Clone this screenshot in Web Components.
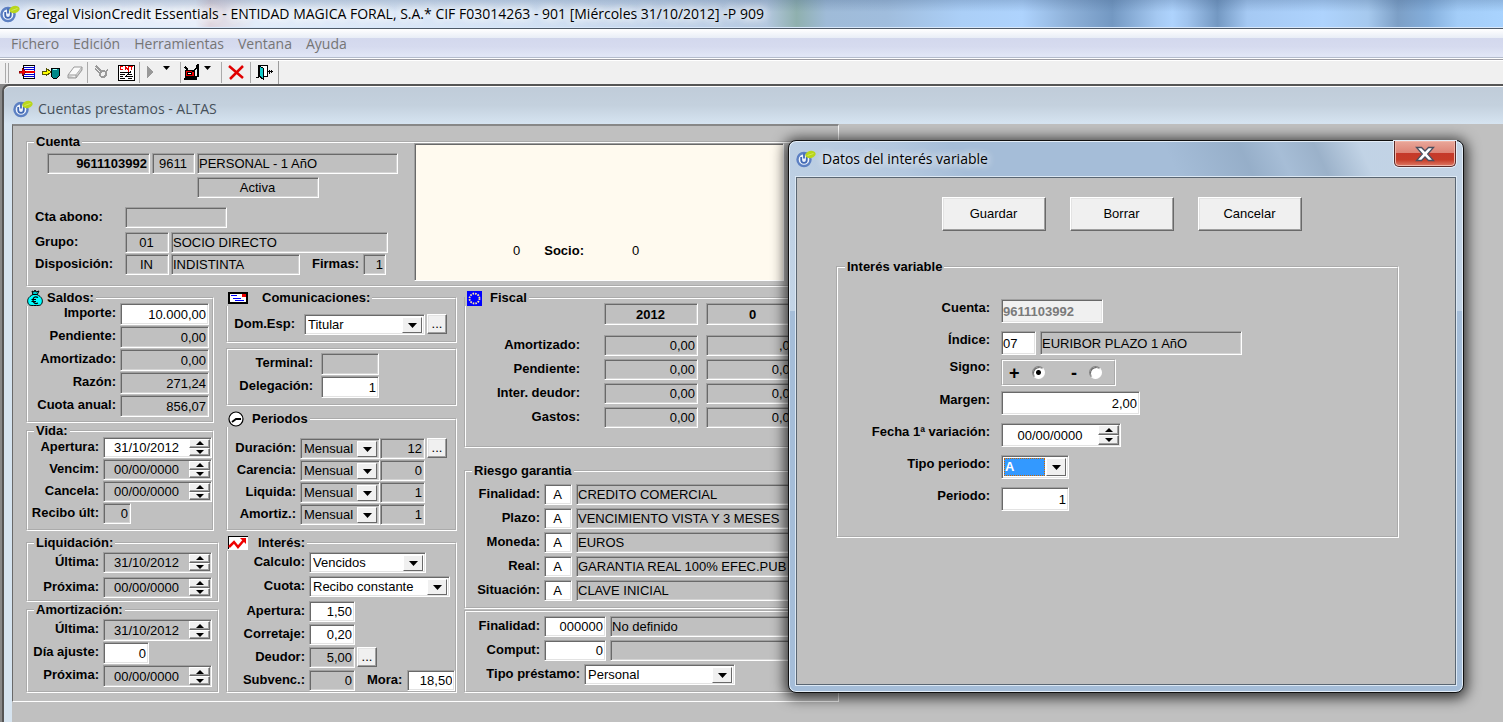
<!DOCTYPE html>
<html lang="es">
<head>
<meta charset="utf-8">
<title>Gregal VisionCredit Essentials</title>
<style>
html, body { margin: 0; height: 100%; }
body { background: #c0c0c0; font: 13px/16px "Liberation Sans", Arial, sans-serif; color: #000; overflow: hidden; }
</style>
</head>
<body>
<credit-app></credit-app>

<script>
const define = (name, render) => customElements.define(name, class extends HTMLElement {
  connectedCallback() {
    if (this.shadowRoot) return;
    this.attachShadow({ mode: 'open' }).innerHTML = render(this);
  }
});
const attr = (el, name, fallback = '') => el.getAttribute(name) ?? fallback;

/* Product emblem: blue power ring with a green leaf */
define('app-logo', () => `
<style>:host{display:block;width:20px;height:18px;flex:none}svg{display:block}</style>
<svg width="20" height="18" viewBox="0 0 20 18">
  <circle cx="8" cy="9.500" r="7.800" fill="#b9c8e6"/>
  <circle cx="8" cy="9.500" r="6.500" fill="#eef3fb" stroke="#5c80c2" stroke-width="2.400"/>
  <path d="M5.200 7v3a2.800 2.800 0 0 0 5.600 0V7" fill="none" stroke="#4068b4" stroke-width="1.800"/>
  <path d="M8 3.500v5" stroke="#4068b4" stroke-width="1.800"/>
  <ellipse cx="14.500" cy="4.500" rx="5.200" ry="3.600" transform="rotate(-14 14.500 4.500)" fill="#b9d61c"/>
  <path d="M11.500 5.500l6-2" stroke="#d3e85a" stroke-width="1"/>
</svg>`);

define('app-titlebar', el => `
<style>
:host{display:flex;align-items:center;height:28px;box-sizing:border-box;border-bottom:1px solid #d9e8fa;
  font:14px/20px "Open Sans","Segoe UI",sans-serif;white-space:nowrap;
  background:
    linear-gradient(180deg,rgba(60,90,130,.25),transparent 12px),
    linear-gradient(90deg,#dfeafa 0,#e8effa 13%,#dfd5de 14%,#e2ecf9 17%,#d4e3f5 34%,#c2d4ea 45%,#b4c8e0 51%,#8fb0ae 53%,#9fbbd8 55%,#a0bddd 59%,#abcff7 64%,#aed3fd 68%,#8fb2da 71%,#7398c2 74%,#a5c9f2 77%,#aed3fd 78%,#a0c4ee 79%,#7398c2 81%,#a5c9f3 83%,#aed3fd 88%,#a6c9ee 91%,#7c9fc6 93%,#84aedb 95%,#a3cdf8 97%,#a9d3fe 100%)}
app-logo{margin:0 6px 0 0}
span{text-shadow:0 0 8px #fff,0 0 8px #fff,0 0 12px #fff}
</style>
<app-logo></app-logo><span><slot></slot></span>`);

define('app-menubar', () => `
<style>
:host{display:block;height:32px;box-sizing:border-box;border-top:1px solid #4e5a68;border-bottom:1px solid #9c9ca4;
  box-shadow:inset 0 -1px #fff,inset 0 -2px #b4bccc;
  background:linear-gradient(180deg,#fff 0,#e8edf6 9px,#d3d8ed 9px,#d6dbef 18px,#e1e6f6 27px)}
nav{display:flex;gap:14px;padding:5px 11px}
a{font:14px/20px "Open Sans","Segoe UI",sans-serif;color:#757575;text-decoration:none}
</style>
<nav>${['Fichero', 'Edición', 'Herramientas', 'Ventana', 'Ayuda'].map(t => `<a href="#">${t}</a>`).join('')}</nav>`);

define('app-toolbar', () => {
  const b = (label, w, svg) => `<button aria-label="${label}" style="width:${w}px"><svg width="18" height="18" viewBox="0 0 18 18" shape-rendering="crispEdges">${svg}</svg></button>`;
  const drop = label => `<button class="drop" aria-label="${label}"><svg width="7" height="4" viewBox="0 0 7 4"><path d="M0 0h7L3.500 4z"/></svg></button>`;
  return `
<style>
:host{display:flex;align-items:center;height:24px;box-sizing:border-box;background:#f0f0f0;border-top:1px solid #fff;padding-left:5px}
.bar{display:flex;align-items:center;height:23px;border-right:1px solid #9c9c9c}
.grip{width:2px;height:20px;border-left:1px solid #aaa;border-right:1px solid #aaa;margin-right:6px}
i{width:1px;height:21px;background:#aaa}
button{display:flex;align-items:center;justify-content:center;border:0;padding:0 0 2px;background:none;height:22px}
.drop{width:12px;padding:0 0 10px 0}
.space{width:8px}
</style>
<div class="bar" role="toolbar"><span class="grip"></span>
${b('Importar', 24, '<path d="M5 3h12v12H5z" fill="#fff"/><path d="M5 2.500h12M5 15.500h12M5.500 2v14" stroke="#000"/><path d="M6 4.500h11M6 6.500h11M6 11.500h11M6 13.500h11M16.500 3v12" stroke="#00c"/><path d="M6 9h11" stroke="#e00" stroke-width="2"/><path d="M1 8h3V5l4 4-4 4v-3H1z" fill="#e00" stroke="#600" stroke-width=".5"/>')}
${b('Guardar', 24, '<path d="M9 5h8v8l-2 2h-4l-2-2z" fill="#088" stroke="#000"/><path d="M11 6.500h4" stroke="#9ff"/><path d="M0 8h4V5l5 4-5 4v-2H0z" fill="#ff0" stroke="#550"/>')}
${b('Limpiar', 24, '<g shape-rendering="auto" stroke="#999"><path d="M2 12L8 4h8l-6 8z" fill="#fafafa"/><path d="M10 12v3l6-8V4M2 12v3h8" fill="#ccc"/></g>')}
<i></i>
${b('Claves', 25, '<circle cx="11" cy="11" r="3" fill="none" stroke="#999" stroke-width="2"/><path d="M4 3l6 6M3 6l5 4M13 9l3-2" stroke="#999" stroke-width="1.500"/>')}
${b('Contrato', 26, '<path d="M1 2h16v15H1z" fill="#fff" stroke="#000"/><path d="M6 3.500H3v3h3M8 7V3l3 4V3M12 3.500h4M14 3v4" fill="none" stroke="#e00"/><path d="M3 9.500h11M3 11.500h5M10 11.500h5M3 13.500h3M9 13.500h7M3 15.500h5M11 15.500h4" stroke="#000"/><path d="M14 8l-6 6" stroke="#000"/>')}
<i></i>
${b('Ejecutar', 20, '<path d="M6 3l7 6-7 6z" fill="#999"/>')}${drop('Más acciones')}<span class="space"></span>
<i></i>
${b('Fax', 20, '<path d="M3 7h9v6H3z" fill="#e00" stroke="#000"/><path d="M2 16h13M3 14h11M3 4l3 3M14 3l2-1M11 9l5-6v10l-3 2" fill="none" stroke="#000" stroke-width="1.500"/><path d="M5 9h4v2H5z" fill="#fff" stroke="#000"/>')}${drop('Más opciones')}<span class="space"></span>
<i></i>
${b('Cancelar', 28, '<path d="M2 3l14 12M16 3L3 16" stroke="#e00000" stroke-width="2.500" shape-rendering="auto"/>')}
<i></i>
${b('Salir', 27, '<path d="M2 2.500h9v11H2z" fill="#fff" stroke="#000"/><path d="M3 3l4 2v11l-4-3z" fill="#1cc" stroke="#000"/><path d="M12 8.500h5M13.500 6.500v4M15.500 7v3M0 14.500h3" stroke="#000"/>')}
</div>`;
});

/* Maximised child window inside the application frame */
define('mdi-window', el => `
<style>
:host{display:block;border-left:2px solid #555;border-top:2px solid #555;border-top-left-radius:7px;background:#c0c0c0}
header{display:flex;align-items:center;height:38px;box-sizing:border-box;padding:7px 0 0 9px;gap:5px;border-top:1px solid #fff;border-top-left-radius:6px;
  font:14px/20px "Open Sans","Segoe UI",sans-serif;color:#46505a;background:linear-gradient(180deg,#c0ccd9,#c4d1de 50%,#d6e4f1)}
.body{border-left:8px solid #d6e4f0;min-height:calc(100vh - 124px);display:flex;align-items:flex-start}
</style>
<header><app-logo></app-logo><span>${attr(el, 'heading')}</span></header>
<div class="body"><slot></slot></div>`);

/* Etched frame with a caption and an optional icon */
define('group-box', el => `
<style>
:host{display:block;margin-top:var(--gap,0)}
fieldset{margin:0;padding:0 0 var(--pb,5px);min-width:0;border:2px groove #fff}
legend{display:flex;gap:var(--ig,0);margin-left:var(--ll,6px);padding:0 2px;height:16px;line-height:16px;font-weight:bold;align-items:center}
.body{display:grid;row-gap:var(--rg,1px);grid-auto-rows:var(--rh,21px);grid-template-rows:var(--rows,none);margin-top:var(--mt,0)}
</style>
<fieldset>${el.hasAttribute('legend') ? `<legend><slot name="icon"></slot><span>${attr(el, 'legend')}</span></legend>` : ''}
<div class="body"><slot></slot></div></fieldset>`);

const controlCss = `
.box{display:flex;box-sizing:border-box;height:var(--fh,21px);min-width:0;background:#fff;
  border:1px solid;border-color:#a0a0a0 #fff #fff #a0a0a0;box-shadow:inset 1px 1px #696969,inset -1px -1px #e3e3e3;padding:1px}
.box.grey{background:#c0c0c0;box-shadow:inset 1px 1px #696969,inset -1px -1px #d4d4d4}
.box.off{background:#f0f0f0}
input,select{font:13px/16px "Liberation Sans",Arial,sans-serif;color:#000;border:0;margin:0;padding:0 1px 0 0;background:none;min-width:0;width:100%;height:100%;box-sizing:border-box;outline:0;appearance:none;border-radius:0}
.bold input{font-weight:bold}
.off input{color:#7a7a7a}
button{border:1px solid;border-color:#fff #696969 #696969 #fff;background:#f0f0f0;box-shadow:inset -1px -1px #a0a0a0;padding:0;box-sizing:border-box;display:flex;align-items:center;justify-content:center}`;

/* A labelled control: kind is text, date or combo */
let serial = 0;
define('form-field', el => {
  const id = 'c' + (++serial), kind = attr(el, 'kind', 'text'), label = attr(el, 'label'), value = attr(el, 'value');
  const cls = ['box', kind, attr(el, 'look')].join(' ');
  const name = label ? '' : `aria-label="${attr(el, 'name', 'Valor')}"`;
  const w = attr(el, 'w') ? `width:${attr(el, 'w')}px;flex:none` : 'flex:1';
  const align = attr(el, 'align', kind === 'date' ? 'center' : 'left');
  const ro = /grey/.test(attr(el, 'look')) ? 'readonly' : /off/.test(attr(el, 'look')) ? 'disabled' : '';
  let inner;
  if (kind === 'combo') inner = `<select id="${id}" ${name}><option>${value}</option></select><span class="arrow"><svg width="9" height="5"><path d="M0 0h9L4.500 5z"/></svg></span>`;
  else inner = `<input id="${id}" ${name} value="${value}" ${ro} style="text-align:${align}">` +
    (kind === 'date' ? `<span class="spin"><button tabindex="-1" aria-label="Subir"><svg width="8" height="4"><path d="M0 4h8L4 0z"/></svg></button><button tabindex="-1" aria-label="Bajar"><svg width="8" height="4"><path d="M0 0h8L4 4z"/></svg></button></span>` : '');
  return `
<style>${controlCss}
:host{display:flex;align-items:flex-start;min-width:0}
label{flex:none;width:var(--lw,auto);margin-right:var(--lg,4px);text-align:var(--ta,right);font-weight:bold;line-height:var(--llh,20px);white-space:nowrap}
.spin{flex:none;width:21px;display:grid;grid-template-rows:1fr 1fr}
.spin button{width:21px;min-height:0}
.combo{display:grid;grid-template-columns:1fr 20px;padding:2px}
.combo select{grid-area:1/1/2/3;padding:0 20px 0 1px}
.arrow{grid-area:1/2;pointer-events:none;border:1px solid;border-color:#fff #696969 #696969 #fff;background:#f0f0f0;display:flex;align-items:center;justify-content:center}
.chosen select{color:#fff;font-weight:bold;background:#39f;outline:1px dotted #c60;outline-offset:-1px;padding:0 0 0 1px;grid-area:1/1;width:calc(100% - 1px)}
</style>
${label ? `<label for="${id}">${label}</label>` : ''}<div class="${cls}" style="${w}">${inner}</div><slot></slot>`;
});

define('push-button', el => `
<style>
:host{display:block}
button{font:13px/16px "Liberation Sans",Arial,sans-serif;color:#000;width:100%;height:100%;padding:0;border:1px solid;border-color:#fff #696969 #696969 #fff;background:#f0f0f0;
 box-shadow:inset -1px -1px #a0a0a0,inset 1px 1px #e3e3e3;display:flex;align-items:center;justify-content:center}
</style><button><slot></slot></button>`);

define('sign-choice', el => `
<style>
:host{display:flex;align-items:flex-start}
.l{flex:none;width:var(--lw);margin-right:var(--lg);text-align:right;font-weight:bold;line-height:16px}
div{display:flex;align-items:center;box-sizing:border-box;width:115px;height:27px;border:2px groove #fff;padding:0 12px 0 6px;justify-content:space-between}
label{display:flex;align-items:center;gap:12px;font:bold 18px/20px "Liberation Sans",Arial,sans-serif}
input{appearance:none;margin:0;width:13px;height:13px;border-radius:50%;background:#fff;border:1px solid;border-color:#808080 #fff #fff #808080;box-shadow:inset 1px 1px #696969}
input:checked{background:radial-gradient(circle at 50% 50%,#000 0 2px,#fff 3px)}
</style>
<span class="l" id="t">Signo:</span>
<div role="radiogroup" aria-labelledby="t"><label>+<input type="radio" name="s" checked></label><label>-<input type="radio" name="s"></label></div>`);

/* Yearly tax figures */
define('fiscal-table', () => {
  const f = (v, n) => `<div class="box grey"><input value="${v}" aria-label="${n}" readonly></div>`;
  const rows = [['Amortizado', ',00'], ['Pendiente', '0,00'], ['Inter. deudor', '0,00'], ['Gastos', '0,00']];
  return `
<style>${controlCss}
:host{display:block}
table{border-collapse:collapse;width:342px;table-layout:fixed}
th,td{padding:0 8px 3px 0;height:21px;vertical-align:top}
tbody th{text-align:right;padding-right:24px;line-height:20px}
thead td,thead th{height:22px;padding-bottom:10px}
thead .box{--fh:22px}
input{text-align:right}
thead input{text-align:center;font-weight:bold}
</style>
<table><colgroup><col style="width:138px"><col style="width:102px"><col style="width:102px"></colgroup>
<thead><tr><td></td><th>${f('2012', 'Ejercicio')}</th><th>${f('0', 'Ejercicio anterior')}</th></tr></thead>
<tbody>${rows.map(r => `<tr><th scope="row">${r[0]}:</th><td>${f('0,00', r[0])}</td><td>${f(r[1], r[0] + ' anterior')}</td></tr>`).join('')}</tbody></table>`;
});

define('loan-form', () => `
<style>
:host{display:block;box-sizing:border-box;border:1px solid;border-color:#696969 #fff #fff #696969;padding:8px 8px 8px 13px;border-top-width:2px;border-top-color:#888}
.cols{display:grid;grid-template-columns:193px 231px 366px;column-gap:7px;margin-top:3px;align-items:start}
.narrow{margin-right:5px}
push-button.dots{width:20px;height:20px;margin-left:2px}
.cuenta{--pb:4px;--mt:3px;--rh:auto;--rg:0;--ta:left}
.top{display:grid;grid-template-columns:370px 370px;column-gap:16px}
.acc{display:grid;grid-template-rows:24px 30px 25px 22px 21px}
.line{display:flex;gap:2px;padding-left:7px;--lw:86px}
.ids{padding-left:19px}
.state{padding-left:169px}
.desc{margin-left:4px}
.member{display:flex;align-items:center;box-sizing:border-box;width:370px;height:138px;background:#fffaef;border:1px solid;border-color:#a0a0a0 #fff #fff #a0a0a0;box-shadow:inset 1px 1px #696969;margin-top:-10px;padding:78px 0 0 98px;gap:24px}
.member b{margin-right:24px}
</style>
<group-box class="cuenta" legend="Cuenta"><div class="top">
  <div class="acc">
    <div class="line ids"><form-field name="Número de cuenta" value="9611103992" look="grey bold" align="right" w="103"></form-field><form-field name="Tipo" value="9611" look="grey" align="center" w="43"></form-field><form-field name="Descripción" value="PERSONAL - 1 AñO" look="grey" w="201"></form-field></div>
    <div class="line state"><form-field name="Estado" value="Activa" look="grey" align="center" w="122"></form-field></div>
    <div class="line"><form-field label="Cta abono:" look="grey" w="102"></form-field></div>
    <div class="line"><form-field label="Grupo:" value="01" look="grey" align="center" w="44"></form-field><form-field name="Nombre del grupo" value="SOCIO DIRECTO" look="grey" w="217"></form-field></div>
    <div class="line"><form-field label="Disposición:" value="IN" look="grey" align="center" w="44"></form-field><form-field name="Nombre de disposición" value="INDISTINTA" look="grey" w="129"></form-field><form-field style="--lw:auto;margin-left:10px" label="Firmas:" value="1" look="grey" align="right" w="23"></form-field></div>
  </div>
  <div class="member"><span>0</span><b>Socio:</b><span>0</span></div>
</div></group-box>

<div class="cols">
<div>
  <group-box class="narrow" legend="Saldos:" style="--ll:-3px;--ig:4px;--mt:-3px;--lw:88px;--rh:22px;--fh:22px;--pb:4px">
    <svg slot="icon" width="16" height="16" viewBox="0 0 16 16"><path d="M5 1l2 1 1-2 1 2 3-1-2 4H6z" fill="#0cc" stroke="#000"/><path d="M6 4.500C1 7 0 10 1 13c1 2.500 2 2.500 7 2.500s6 0 7-2.500c1-3 0-6-5-8.500z" fill="#0ff" stroke="#000"/><path d="M11 7.500c-3-1.500-5 0-5 2.500s2 4.500 5 3M4.500 9.500H9M4.500 11.500H9" fill="none" stroke="#000" stroke-width="1.200"/></svg>
    <form-field label="Importe:" value="10.000,00" align="right" w="89"></form-field>
    <form-field label="Pendiente:" value="0,00" look="grey" align="right" w="89"></form-field>
    <form-field label="Amortizado:" value="0,00" look="grey" align="right" w="89"></form-field>
    <form-field label="Razón:" value="271,24" look="grey" align="right" w="89"></form-field>
    <form-field label="Cuota anual:" value="856,07" look="grey" align="right" w="89"></form-field>
  </group-box>
  <group-box class="narrow" legend="Vida:" style="--mt:-2px;--lw:71px">
    <form-field label="Apertura:" kind="date" value="31/10/2012" w="109"></form-field>
    <form-field label="Vencim:" kind="date" value="00/00/0000" look="grey" w="109"></form-field>
    <form-field label="Cancela:" kind="date" value="00/00/0000" look="grey" w="109"></form-field>
    <form-field label="Recibo últ:" value="0" look="grey" align="right" w="28"></form-field>
  </group-box>
  <group-box legend="Liquidación:" style="--gap:4px;--mt:1px;--lw:71px;--rg:4px;--pb:2px">
    <form-field label="Última:" kind="date" value="31/10/2012" look="grey" w="109"></form-field>
    <form-field label="Próxima:" kind="date" value="00/00/0000" look="grey" w="109"></form-field>
  </group-box>
  <group-box legend="Amortización:" style="--mt:1px;--lw:71px;--rh:22px;--fh:22px;--pb:4px">
    <form-field label="Última:" kind="date" value="31/10/2012" look="grey" w="109"></form-field>
    <form-field label="Día ajuste:" value="0" align="right" w="46"></form-field>
    <form-field label="Próxima:" kind="date" value="00/00/0000" look="grey" w="109"></form-field>
  </group-box>
</div>

<div>
  <group-box legend="Comunicaciones:" style="--ll:-2px;--ig:14px;--mt:8px;--lw:67px;--lg:9px;--pb:6px">
    <svg slot="icon" width="20" height="12" viewBox="0 0 20 12" shape-rendering="crispEdges"><path d="M1 1h18v10H1z" fill="#fff" stroke="#000" stroke-width="2"/><path d="M3 3.500h6M5 6.500h8M7 8.500h9" stroke="#00f"/><path d="M14 2h4v3h-4z" fill="#e00"/></svg>
    <form-field label="Dom.Esp:" kind="combo" value="Titular" w="121"><push-button class="dots">...</push-button></form-field>
  </group-box>
  <group-box style="--gap:5px;--mt:3px;--lw:85px;--lg:8px;--rh:22px;--fh:22px;--pb:6px">
    <form-field label="Terminal:" look="grey" w="58"></form-field>
    <form-field label="Delegación:" value="1" align="right" w="58"></form-field>
  </group-box>
  <group-box legend="Periodos" style="--gap:5px;--ll:-2px;--ig:8px;--mt:11px;--lw:68px;--pb:4px">
    <svg slot="icon" width="16" height="16" viewBox="0 0 16 16"><circle cx="8" cy="8" r="7" fill="#fff" stroke="#000" stroke-width="1.200"/><path d="M4 11l4-3h5" fill="none" stroke="#000" stroke-width="1.800"/></svg>
    <form-field label="Duración:" kind="combo" value="Mensual" look="grey" w="80"><form-field name="Duración en periodos" value="12" look="grey" align="right" w="45"></form-field><push-button class="dots">...</push-button></form-field>
    <form-field label="Carencia:" kind="combo" value="Mensual" look="grey" w="80"><form-field name="Carencia en periodos" value="0" look="grey" align="right" w="45"></form-field></form-field>
    <form-field label="Liquida:" kind="combo" value="Mensual" look="grey" w="80"><form-field name="Liquidación en periodos" value="1" look="grey" align="right" w="45"></form-field></form-field>
    <form-field label="Amortiz.:" kind="combo" value="Mensual" look="grey" w="80"><form-field name="Amortización en periodos" value="1" look="grey" align="right" w="45"></form-field></form-field>
  </group-box>
  <group-box legend="Interés:" style="--gap:4px;--ll:-2px;--ig:10px;--mt:1px;--lw:77px;--rg:0;--rows:24px 25px 23px 23px 23px 21px;--pb:0">
    <svg slot="icon" width="20" height="14" viewBox="0 0 20 14"><path d="M0 0h20v14H0z" fill="#fff"/><path d="M0 .5h20M.5 0v13" stroke="#000"/><path d="M1 11l5-5 4 5 6-7" fill="none" stroke="#e00" stroke-width="2.500"/><path d="M12 2h6v6z" fill="#e00"/></svg>
    <form-field label="Calculo:" kind="combo" value="Vencidos" w="117"></form-field>
    <form-field label="Cuota:" kind="combo" value="Recibo constante" w="141"></form-field>
    <form-field label="Apertura:" value="1,50" align="right" w="46"></form-field>
    <form-field label="Corretaje:" value="0,20" align="right" w="46"></form-field>
    <form-field label="Deudor:" value="5,00" look="grey" align="right" w="46"><push-button class="dots">...</push-button></form-field>
    <form-field label="Subvenc.:" value="0" look="grey" align="right" w="46"><form-field style="--lw:auto;--lg:5px;margin-left:12px" label="Mora:" value="18,50" align="right" w="48"></form-field></form-field>
  </group-box>
</div>

<div>
  <group-box legend="Fiscal" style="--ll:-1px;--ig:8px;--mt:-3px;--rh:auto;--pb:15px">
    <svg slot="icon" width="15" height="15" viewBox="0 0 15 15"><path d="M0 0h15v15H0z" fill="#00f"/><circle cx="7.500" cy="7.500" r="5" fill="none" stroke="#ffe9a0" stroke-width="1.800" stroke-dasharray="1.600 1.020"/></svg>
    <fiscal-table></fiscal-table>
  </group-box>
  <group-box legend="Riesgo garantia" style="--gap:15px;--mt:5px;--lw:74px;--rg:3px;--pb:6px">
    <form-field label="Finalidad:" value="A" align="center" w="28"><form-field class="desc" name="Finalidad" value="CREDITO COMERCIAL" look="grey" w="240"></form-field></form-field>
    <form-field label="Plazo:" value="A" align="center" w="28"><form-field class="desc" name="Plazo" value="VENCIMIENTO VISTA Y 3 MESES" look="grey" w="240"></form-field></form-field>
    <form-field label="Moneda:" value="A" align="center" w="28"><form-field class="desc" name="Moneda" value="EUROS" look="grey" w="240"></form-field></form-field>
    <form-field label="Real:" value="A" align="center" w="28"><form-field class="desc" name="Real" value="GARANTIA REAL 100% EFEC.PUB" look="grey" w="240"></form-field></form-field>
    <form-field label="Situación:" value="A" align="center" w="28"><form-field class="desc" name="Situación" value="CLAVE INICIAL" look="grey" w="240"></form-field></form-field>
  </group-box>
  <group-box style="--gap:1px;--mt:4px;--lw:74px;--rg:3px;--pb:6px">
    <form-field label="Finalidad:" value="000000" align="right" w="62"><form-field class="desc" name="Finalidad" value="No definido" look="grey" w="206"></form-field></form-field>
    <form-field label="Comput:" value="0" align="right" w="62"><form-field class="desc" name="Cómputo" look="grey" w="206"></form-field></form-field>
    <form-field style="--lw:114px" label="Tipo préstamo:" kind="combo" value="Personal" w="151"></form-field>
  </group-box>
</div>
</div>`);

/* Floating dialog with a glass frame */
define('glass-dialog', el => `
<style>
:host{display:flex;flex-direction:column;box-sizing:border-box;position:absolute;right:39px;top:140px;width:676px;padding:0 7px 7px;border:1px solid #111;border-radius:8px;
  box-shadow:inset 0 0 0 1px #e4eef8,0 2px 14px 3px rgba(0,0,0,.75);
  background:linear-gradient(65deg,rgba(205,220,235,.75) 0,rgba(200,215,232,.4) 24%,transparent 32%,transparent 60%,rgba(115,140,165,.3) 70%,rgba(170,190,210,.3) 75%,rgba(140,160,180,.4) 80%,rgba(205,220,235,.7) 86%,#c3d3e4 100%) 0 0/100% 170px no-repeat,#a5bdd8}
header{display:flex;align-items:center;height:36px;flex:none;gap:6px;font:14px/18px "Open Sans","Segoe UI",sans-serif;text-shadow:0 0 8px #fff,0 0 10px #fff}
.close{align-self:flex-start;margin-left:auto;width:62px;height:26px;padding:0;border:1px solid #5c2a28;border-top:0;border-radius:0 0 5px 5px;
  box-shadow:inset 0 0 0 1px #f0b5a8,0 0 0 1px #e4eef8;background:linear-gradient(180deg,#e9a79a,#dd8375 48%,#c5392a 50%,#c63c28 75%,#dd7a66)}
.close svg{display:block;margin:auto}
.body{border:1px solid #5a6672;background:#c0c0c0;box-shadow:0 0 0 1px #dce8f4;box-sizing:border-box}
</style>
<header><app-logo></app-logo><span>${attr(el, 'heading')}</span><button class="close" aria-label="Cerrar"><svg width="20" height="16" viewBox="0 0 20 16"><path d="M1.500 1.500h5L10 5l3.500-3.500h5L12.700 8l5.800 6.500h-5L10 11l-3.500 3.500h-5L7.300 8z" fill="#fff" stroke="#4b5060" stroke-width="1.300"/></svg></button></header>
<div class="body"><slot></slot></div>`);

define('rate-form', () => `
<style>
:host{display:block;padding:19px 56px 146px 39px}
.actions{display:flex;justify-content:center;gap:24px;margin-bottom:28px;padding-left:8px}
.actions push-button{width:104px;height:34px}
group-box{--ll:7px;--mt:24px;--lw:152px;--lg:11px;--fh:24px;--rg:0;--rh:32px;--rows:32px 28px;--pb:17px;--llh:18px}
.desc{margin-left:4px}
</style>
<div class="actions"><push-button>Guardar</push-button><push-button>Borrar</push-button><push-button>Cancelar</push-button></div>
<group-box legend="Interés variable">
  <form-field label="Cuenta:" value="9611103992" look="off bold" w="102"></form-field>
  <form-field label="Índice:" value="07" w="35"><form-field class="desc" name="Descripción del índice" value="EURIBOR PLAZO 1 AñO" look="grey" w="202"></form-field></form-field>
  <sign-choice></sign-choice>
  <form-field label="Margen:" value="2,00" align="right" w="139"></form-field>
  <form-field label="Fecha 1ª variación:" kind="date" value="00/00/0000" w="120"></form-field>
  <form-field label="Tipo periodo:" kind="combo" value="A" look="chosen" w="68"></form-field>
  <form-field label="Periodo:" value="1" align="right" w="68"></form-field>
</group-box>`);

define('credit-app', () => `
<style>
:host{display:flex;flex-direction:column;min-height:100vh;position:relative;background:#888}
mdi-window{flex:1;margin-left:2px}
</style>
<app-titlebar>Gregal VisionCredit Essentials - ENTIDAD MAGICA FORAL, S.A.* CIF F03014263 - 901 [Miércoles 31/10/2012] -P 909</app-titlebar>
<app-menubar></app-menubar>
<app-toolbar></app-toolbar>
<mdi-window heading="Cuentas prestamos - ALTAS"><loan-form></loan-form></mdi-window>
<glass-dialog heading="Datos del interés variable"><rate-form></rate-form></glass-dialog>`);
</script>
</body>
</html>
